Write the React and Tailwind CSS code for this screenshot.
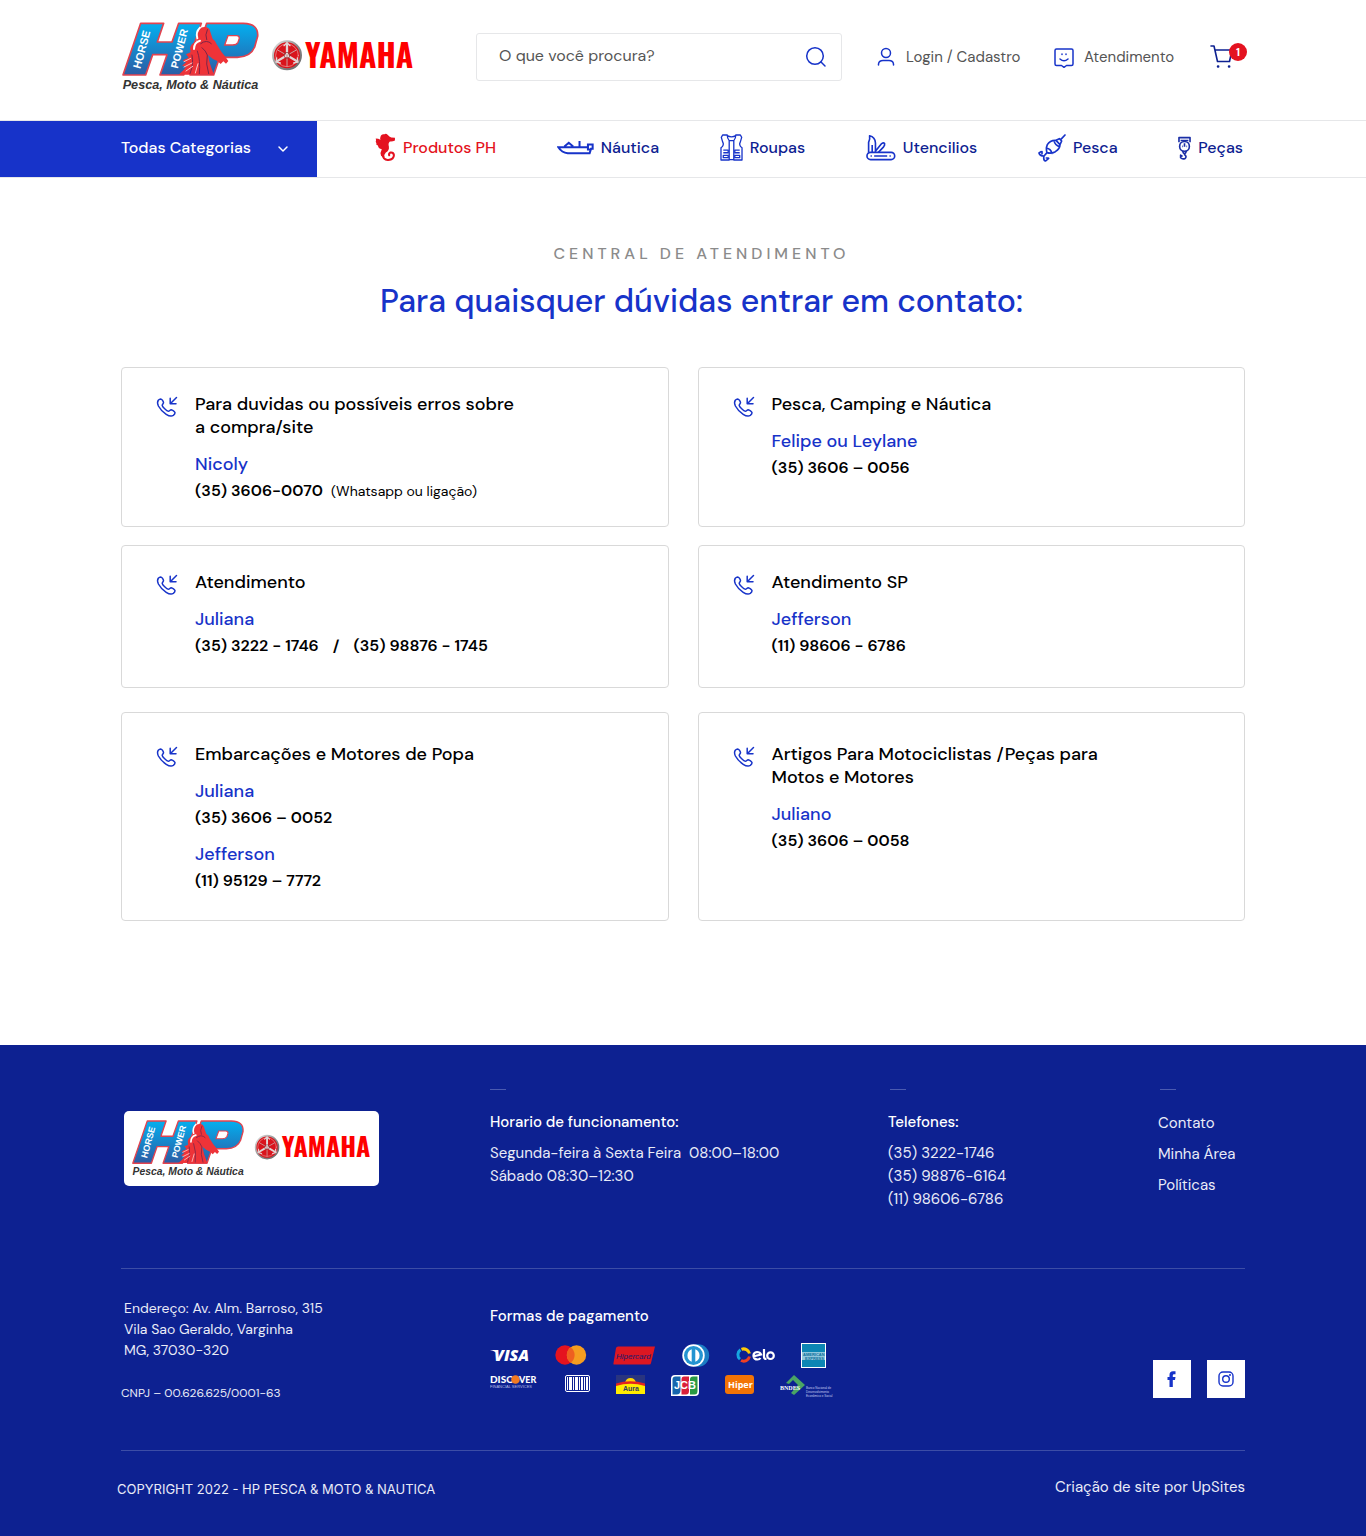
import React from "react";

const contacts = [
  [
    {
      title: ["Para duvidas ou possíveis erros sobre", "a compra/site"],
      people: [{ name: "Nicoly", phones: ["(35) 3606-0070"], note: "(Whatsapp ou ligação)" }],
    },
    { title: ["Pesca, Camping e Náutica"], people: [{ name: "Felipe ou Leylane", phones: ["(35) 3606 – 0056"] }] },
  ],
  [
    { title: ["Atendimento"], people: [{ name: "Juliana", phones: ["(35) 3222 - 1746", "(35) 98876 - 1745"] }] },
    { title: ["Atendimento SP"], people: [{ name: "Jefferson", phones: ["(11) 98606 - 6786"] }] },
  ],
  [
    {
      title: ["Embarcações e Motores de Popa"],
      people: [
        { name: "Juliana", phones: ["(35) 3606 – 0052"] },
        { name: "Jefferson", phones: ["(11) 95129 – 7772"] },
      ],
    },
    {
      title: ["Artigos Para Motociclistas /Peças para", "Motos e Motores"],
      people: [{ name: "Juliano", phones: ["(35) 3606 – 0058"] }],
    },
  ],
];
const rowMargins = ["", "mt-[18px]", "mt-6"];
const rowPads = ["pt-[25px] pb-[23px]", "pt-[25px] pb-[30px]", "pt-[30px] pb-7"];

function Logo({ id, className }) {
  const grad = `url(#${id})`;
  return (
    <svg viewBox="36 32 876 216" className={className} role="img" aria-label="HP Horse Power e Yamaha">
      <defs>
        <linearGradient id={id} x1="0" y1="38" x2="0" y2="193" gradientUnits="userSpaceOnUse">
          <stop offset="0" stopColor="#03b0f0" />
          <stop offset="1" stopColor="#2c5ca4" />
        </linearGradient>
        <linearGradient id={`${id}-m`} x1="0" y1="0" x2="1" y2="1">
          <stop offset="0" stopColor="#e9e9e9" />
          <stop offset="0.5" stopColor="#8d8d8d" />
          <stop offset="1" stopColor="#666" />
        </linearGradient>
      </defs>
      <g fill={grad} stroke="#e2434f" strokeWidth="5" strokeLinejoin="round">
        <path d="M92 39H161L142 95H186L206 39H274L221 194H150L171 133H128L107 194H39Z" />
        <path d="M290 39H400Q446 40 443 78L434 110Q422 140 382 141H329L311 194H240L262 120Z" />
      </g>
      <path d="M354 76L344 104H368Q380 104 384 96L388 84Q388 76 380 76Z" fill="#fff" stroke="#e2434f" strokeWidth="4" />
      <path
        d="M262 62Q272 48 288 50Q296 52 299 58Q304 74 308 86Q318 92 320 102L334 124Q346 138 355 152L348 160L340 153L332 161L322 152Q306 146 294 134Q298 160 312 193H206Q222 180 230 168L216 166L228 156L218 150L236 142L228 132L242 126Q236 108 250 98L260 90Q256 74 262 62Z"
        fill="#ee3338"
      />
      <g fill="none" strokeLinecap="round">
        <path d="M262 84Q256 66 270 52M252 116Q252 96 270 91" stroke="#fff" strokeWidth="6" />
        <path d="M272 100Q290 86 304 100M276 112Q288 122 292 134Q286 160 296 190M262 122Q272 150 268 190M246 134Q252 160 240 190M292 58Q284 74 290 88" stroke="#7d2547" strokeWidth="3" />
        <path d="M222 154L242 144M222 170L246 158M228 182L248 168M256 188L264 160" stroke="#fbc9c9" strokeWidth="3" />
      </g>
      <g fill="#fff" fontFamily='"Liberation Sans", Arial, sans-serif' fontWeight="700">
        <text transform="translate(91 177) rotate(-75)" fontSize="33">HORSE</text>
        <text transform="translate(203 176) rotate(-75)" fontSize="32">POWER</text>
      </g>
      <text x="38" y="236" fill="#333" fontFamily='"Liberation Sans", Arial, sans-serif' fontWeight="700" fontStyle="italic" fontSize="38">
        Pesca, Moto &amp; Náutica
      </text>
      <circle cx="531" cy="135" r="42" fill="#d9141c" stroke={`url(#${id}-m)`} strokeWidth="6" />
      <g fill="none" stroke="#e2d6d6" strokeLinecap="round">
        <circle cx="531" cy="135" r="34" strokeWidth="2" stroke="#f0a5a5" />
        <path d="M531 100V135M501 153L531 135L561 153" strokeWidth="7" />
        <path d="M531 135V168M503 119L531 135L559 119" strokeWidth="3" stroke="#c9a1a3" />
        <path d="M522 106L531 97L540 106M500 143L498 155L511 158M562 143L564 155L551 158" strokeWidth="4" />
        <circle cx="531" cy="135" r="9" strokeWidth="2" stroke="#7c3034" />
      </g>
      <text x="585" y="173" fill="#fe0000" fontFamily='Oswald, "Roboto Condensed", Roboto, sans-serif' fontWeight="700" fontSize="95">
        YAMAHA
      </text>
    </svg>
  );
}

function SeahorseIcon() {
  return (
    <svg viewBox="46 40 62 86" className="h-[29px] w-[21px] shrink-0" aria-hidden="true">
      <path d="M62 52Q64 42 74 44Q78 40 84 46Q88 51 94 53L105 54V62Q98 66 90 65Q84 70 87 80Q89 92 78 98Q72 104 74 112L64 108Q60 98 66 88Q58 86 56 82Q56 76 50 75Q51 70 48 66Q50 62 48 56Q56 56 62 60Q60 56 62 52Z" fill="#e41220" />
      <path d="M68 102Q70 121 85 120Q102 118 102 105Q100 96 91 98Q86 101 88 106" fill="none" stroke="#e41220" strokeWidth="6" strokeLinecap="round" />
    </svg>
  );
}
function BoatIcon() {
  return (
    <svg viewBox="590 60 110 44" className="h-[15px] w-[37px] shrink-0" fill="none" stroke="#1733c9" strokeWidth="6" aria-hidden="true">
      <path d="M594 81H682V73H696V86H691L687 99H622Q604 97 594 81ZM612 79L625 68L638 79M657 63V80M682 81V88H692" />
    </svg>
  );
}
function VestIcon() {
  return (
    <svg viewBox="1078 42 70 82" className="h-[27px] w-[23px] shrink-0" fill="none" stroke="#1733c9" strokeWidth="4" strokeLinejoin="round" aria-hidden="true">
      <path d="M1086 45H1100Q1100 56 1106 62V121H1081V84Q1092 76 1086 66L1082 52ZM1140 45H1126Q1126 56 1120 62V121H1145V84Q1134 76 1140 66L1144 52ZM1100 47Q1113 54 1126 47M1106 62H1120M1106 120H1120" />
      <path d="M1088 91H1103V99H1088M1088 107H1103V114H1088ZM1138 91H1123V99H1138M1138 107H1123V114H1138Z" />
    </svg>
  );
}
function KnifeIcon() {
  return (
    <svg viewBox="136 42 92 80" className="h-[27px] w-[30px] shrink-0" fill="none" stroke="#1733c9" strokeWidth="5" strokeLinejoin="round" aria-hidden="true">
      <rect x="139" y="97" width="85" height="22" rx="11" />
      <path d="M144 97V66Q149 56 147 46Q164 50 165 68V97M155 97V74M166 92L184 70Q190 66 193 70Q194 75 190 80L174 97M161 108H201" />
      <path d="M150 108H154M208 108H212" />
    </svg>
  );
}
function LureIcon() {
  return (
    <svg viewBox="652 40 84 84" className="h-7 w-7 shrink-0" fill="none" stroke="#1733c9" strokeWidth="5" strokeLinecap="round" strokeLinejoin="round" aria-hidden="true">
      <path d="M733 43L720 57M706 59L716 54L723 61L718 72M706 59Q688 58 680 72Q675 84 679 96Q692 100 704 93Q718 84 718 72ZM700 60Q703 74 717 78M677 82Q690 84 694 98M679 96L670 106Q657 106 655 97L661 93M670 106Q667 119 675 121L684 113M664 93V99M683 112H677" />
    </svg>
  );
}
function HookIcon() {
  return (
    <svg viewBox="1072 46 40 72" className="h-6 w-[13px] shrink-0" fill="none" stroke="#1a2ea6" strokeWidth="5" strokeLinejoin="round" aria-hidden="true">
      <path d="M1075 64V50H1109V64M1080 59H1104" />
      <circle cx="1092" cy="77" r="15" />
      <path d="M1092 67V78M1085 77H1087M1098 77H1100M1086 91L1089 98H1095L1098 91M1092 98V102Q1100 108 1094 114Q1086 118 1080 112V104L1086 108" />
    </svg>
  );
}

const nav = [
  { label: "Produtos PH", icon: <SeahorseIcon />, cls: "text-[#e41220]" },
  { label: "Náutica", icon: <BoatIcon />, cls: "text-[#0d2191]" },
  { label: "Roupas", icon: <VestIcon />, cls: "text-[#0d2191]" },
  { label: "Utencilios", icon: <KnifeIcon />, cls: "text-[#0d2191]" },
  { label: "Pesca", icon: <LureIcon />, cls: "text-[#0d2191]" },
  { label: "Peças", icon: <HookIcon />, cls: "text-[#0d2191]" },
];

function PhoneIcon() {
  return (
    <svg viewBox="0 0 24 24" className="mt-[2px] h-6 w-6 shrink-0" fill="none" stroke="#1733c9" strokeWidth="1.500" strokeLinecap="round" strokeLinejoin="round" aria-hidden="true">
      <path d="M21.500 2.500L15.500 8.500M15.200 3.200V8.800H21" />
      <path d="M3.300 5.200C4 4.400 4.800 3.900 5.600 3.900C6.800 4 8.200 6.200 8.500 7.400C8.700 8.600 7.200 9.100 7.200 10.300C7.400 11.800 11.600 16 13.400 16.200C14.600 16.200 15 14.800 16.200 14.800C17.400 15 19.800 16.400 20 17.700C20 18.600 19.400 19.600 18.300 20.400C16.400 21.700 13.800 21 11.200 19.300C8.200 17.300 5 14 3.400 11C2.400 8.800 2.200 6.700 3.300 5.200Z" />
    </svg>
  );
}

function Card({ card, pad }) {
  return (
    <article className={`flex gap-4 rounded border border-[#d9d9d9] bg-white pl-[33px] pr-4 ${pad}`}>
      <PhoneIcon />
      <div>
        <h2 className="text-lg leading-[23px] font-medium text-black">
          {card.title.map((t) => (
            <span key={t} className="block">{t}</span>
          ))}
        </h2>
        {card.people.map((p) => (
          <div key={p.name} className="mt-[14px]">
            <p className="text-lg leading-[23px] font-medium text-[#1733c9]">{p.name}</p>
            <p className="mt-[3px] flex items-baseline text-base leading-[23px] font-semibold text-black">
              {p.phones.map((n, i) => (
                <React.Fragment key={n}>
                  {i > 0 && <span className="mx-[14px]">/</span>}
                  <a href={`tel:${n.replace(/\D/g, "")}`}>{n}</a>
                </React.Fragment>
              ))}
              {p.note && <span className="ml-2 text-sm leading-[23px] font-normal">{p.note}</span>}
            </p>
          </div>
        ))}
      </div>
    </article>
  );
}

const brandFont = '"Liberation Sans", Arial, sans-serif';

function Payments() {
  return (
    <div className="mt-[14px]">
      <div className="flex h-[26px] items-center gap-[26px]">
        <svg className="h-5 w-[39px]" viewBox="0 0 39 20" role="img" aria-label="Visa">
          <text x="4" y="16" fill="#fff" fontFamily='"Open Sans", sans-serif' fontStyle="italic" fontWeight="800" fontSize="16">VISA</text>
          <path d="M0 5H6L9 11Q6 6 0 5Z" fill="#fff" />
        </svg>
        <svg className="h-5 w-8" viewBox="0 0 32 20" role="img" aria-label="Mastercard">
          <circle cx="10" cy="10" r="9.700" fill="#e5131f" />
          <circle cx="21.500" cy="10" r="9.700" fill="#f59d20" />
          <path d="M15.700 2.200A9.700 9.700 0 0 1 15.700 17.800A9.700 9.700 0 0 1 15.700 2.200Z" fill="#ee6020" />
        </svg>
        <svg className="h-[19px] w-[43px]" viewBox="0 0 43 19" role="img" aria-label="Hipercard">
          <path d="M5 0.500H42L38 17Q38 18.500 36 18.500H1Q0 18.500 0.500 17L3 2Q3.500 0.500 5 0.500Z" fill="#dd1722" />
          <text x="3" y="12.500" fill="#171c6e" fontFamily={brandFont} fontStyle="italic" fontSize="8">Hipercard</text>
        </svg>
        <svg className="h-[23px] w-7" viewBox="0 0 28 23" role="img" aria-label="Diners Club">
          <circle cx="16" cy="11.500" r="11.200" fill="#1b7dc4" />
          <circle cx="11.500" cy="11.500" r="11.200" fill="#fff" />
          <circle cx="11.500" cy="11.500" r="9.500" fill="#2494d1" />
          <path d="M9.700 5.200A6.800 6.800 0 0 0 9.700 17.800ZM13.300 5.200A6.800 6.800 0 0 1 13.300 17.800Z" fill="#fff" />
        </svg>
        <svg className="h-4 w-[39px]" viewBox="0 0 39 16" fill="none" role="img" aria-label="Elo">
          <path d="M4.500 2.700A6 6 0 0 0 4 12.200" stroke="#16a6e0" strokeWidth="3" />
          <path d="M5.500 2.300A6 6 0 0 1 13.500 6.500" stroke="#ffcb05" strokeWidth="3" />
          <path d="M13.500 9.500A6 6 0 0 1 5 13.500" stroke="#ee4023" strokeWidth="3" />
          <path d="M17 9.500L25 7.500Q24 5 21 5Q17.200 5.500 17.500 9Q18 12.500 21.500 12.500Q23.500 12.500 24.500 11M28 2V10Q28 12 30.500 12" stroke="#fff" strokeWidth="2.200" />
          <circle cx="34.500" cy="8.700" r="3.300" stroke="#fff" strokeWidth="2.200" />
        </svg>
        <svg className="h-[25px] w-[25px]" viewBox="0 0 25 25" role="img" aria-label="American Express">
          <rect width="25" height="25" fill="#fff" />
          <rect x="1" y="1" width="23" height="23" fill="#0c86b4" />
          <path d="M1 9H24V17H1Z" fill="#8fc7dd" />
          <text x="2" y="12.800" fill="#0c6f9c" fontFamily={brandFont} fontWeight="700" fontSize="4">AMERICAN</text>
          <text x="4" y="16.600" fill="#0c6f9c" fontFamily={brandFont} fontWeight="700" fontSize="4">EXPRESS</text>
        </svg>
      </div>
      <div className="mt-[7px] flex h-6 items-start gap-[26px]">
        <svg className="-mt-1 h-5 w-[49px]" viewBox="0 -4 49 20" role="img" aria-label="Discover Financial Services">
          <text x="0" y="8" fill="#fff" fontFamily="Lato, sans-serif" fontWeight="900" fontSize="10">DISC</text>
          <circle cx="25.500" cy="4.500" r="4.300" fill="#f27a22" />
          <text x="29" y="8" fill="#fff" fontFamily="Lato, sans-serif" fontWeight="900" fontSize="9">VER</text>
          <text x="0" y="13" fill="#b6bde4" fontFamily={brandFont} fontSize="4">FINANCIAL SERVICES</text>
        </svg>
        <svg className="h-[17px] w-[25px]" viewBox="0 0 25 17" role="img" aria-label="Boleto">
          <rect x="0.500" y="0.500" width="24" height="16" rx="1.500" fill="#0d2191" stroke="#fff" />
          <path d="M2 2H3V15H2ZM4 2H7V15H4ZM8 2H9V15H8ZM10 2H13V15H10ZM14 2H15V15H14ZM16 2H18V15H16ZM19 2H20V15H19ZM21 2H23V15H21Z" fill="#fff" />
        </svg>
        <svg className="h-[19px] w-[29px]" viewBox="0 0 29 19" role="img" aria-label="Aura">
          <rect width="29" height="19" fill="#29347f" />
          <path d="M9 8Q10 3 14.500 3Q19 3 20 8Z" fill="#ffd400" />
          <path d="M0 8.500Q14.500 4 29 8.500V19H0Z" fill="#e4231f" />
          <path d="M0 11Q14.500 6.500 29 11V19H0Z" fill="#ffec00" />
          <text x="7" y="16" fill="#333b60" fontFamily={brandFont} fontWeight="700" fontSize="7">Aura</text>
        </svg>
        <svg className="h-[21px] w-7" viewBox="0 0 28 21" role="img" aria-label="JCB">
          <path d="M4 0H28V17Q28 21 24 21H0V4Q0 0 4 0Z" fill="#fff" />
          <path d="M4.500 1.500H9.500V15Q9.500 19.500 5.500 19.500H1.500V4.500Q1.500 1.500 4.500 1.500Z" fill="#1766ad" />
          <path d="M13 1.500H18V16Q18 19.500 15 19.500H10.500V4.500Q10.500 1.500 13 1.500Z" fill="#d9203a" />
          <path d="M22 1.500H26.500V16Q26.500 19.500 23.500 19.500H19V4.500Q19 1.500 22 1.500Z" fill="#299a43" />
          <text x="3" y="14" fill="#fff" fontFamily={brandFont} fontWeight="700" fontSize="11">JCB</text>
        </svg>
        <svg className="h-[19px] w-[29px]" viewBox="0 0 29 19" role="img" aria-label="Hiper">
          <rect width="29" height="19" rx="3" fill="#f27405" />
          <text x="3" y="13" fill="#fff" fontFamily='"Open Sans", sans-serif' fontWeight="700" fontSize="9">Hiper</text>
        </svg>
        <svg className="h-6 w-[54px]" viewBox="0 0 54 24" role="img" aria-label="BNDES">
          <path d="M6 8L14 0L25 10L14 20L11 18L18 10L13 5L9 9Z" fill="#4aa564" />
          <text x="0" y="15" fill="#fff" fontFamily='"Liberation Serif", serif' fontWeight="700" fontSize="6">BNDES</text>
          <g fill="#c6cdf0" fontFamily={brandFont} fontSize="3">
            <text x="26" y="14">Banco Nacional de</text>
            <text x="26" y="18">Desenvolvimento</text>
            <text x="26" y="22">Econômico e Social</text>
          </g>
        </svg>
      </div>
    </div>
  );
}

export default function App() {
  return (
    <div className="min-h-screen bg-white font-['DM_Sans','Inter',sans-serif] text-black">
      <header>
        <div className="mx-auto grid h-[120px] max-w-[1124px] grid-cols-[355fr_366fr_212fr_156fr_35fr] items-start">
          <a href="#" className="mt-[21px] ml-px block">
            <Logo id="hp-header" className="h-[72px] w-[292px]" />
          </a>
          <form className="mt-[33px] flex h-12 items-center rounded-[3px] border border-[#e6e7e9] pr-[14px]">
            <label htmlFor="search" className="sr-only">Buscar produtos</label>
            <input id="search" type="text" placeholder="O que você procura?" className="mb-[3px] h-10 min-w-0 flex-1 pl-[22px] text-base leading-6 text-[#555] outline-none placeholder:text-[#555]" />
            <button type="button" aria-label="Buscar">
              <svg viewBox="0 0 22 22" className="h-[22px] w-[22px]" fill="none" stroke="#1733c9" strokeWidth="1.500" strokeLinecap="round">
                <circle cx="10" cy="10" r="8.300" />
                <path d="M16 16L20 20" />
              </svg>
            </button>
          </form>
          <a href="#" className="mt-[46px] flex items-center gap-[11px] pl-[35px] text-[15px] leading-[22px] whitespace-nowrap text-[#555]">
            <svg viewBox="0 0 18 20" className="h-5 w-[18px]" fill="none" stroke="#1733c9" strokeWidth="1.500" strokeLinecap="round" aria-hidden="true">
              <circle cx="9" cy="6" r="4.500" />
              <path d="M1.500 18V17Q2 13.500 6 13.500H12Q16 13.500 16.500 17V18" />
            </svg>
            Login / Cadastro
          </a>
          <a href="#" className="mt-[46px] flex items-center gap-[10px] text-[15px] leading-[22px] whitespace-nowrap text-[#555]">
            <svg viewBox="0 0 20 20" className="mt-px h-5 w-5" fill="none" stroke="#1733c9" strokeWidth="1.500" strokeLinecap="round" strokeLinejoin="round" aria-hidden="true">
              <path d="M2.500 1H17.500Q19 1 19 2.500V16Q19 17.500 17.500 17.500H12.500L10 19.300L7.500 17.500H2.500Q1 17.500 1 16V2.500Q1 1 2.500 1ZM6 11Q10 14.500 14 11" />
              <path d="M8 6V6.500M12 6V6.500" />
            </svg>
            Atendimento
          </a>
          <a href="#" aria-label="Carrinho" className="relative mt-[45px] block">
            <svg viewBox="0 0 24 24" className="h-6 w-6" fill="none" stroke="#0d2191" strokeWidth="1.600" strokeLinecap="round" strokeLinejoin="round" aria-hidden="true">
              <path d="M1 1H4L7.500 16.500H19.500L22 5H5" />
              <path d="M8 21.500H8.200M19 21.500H19.200" strokeWidth="2.500" />
            </svg>
            <span className="absolute -top-0.5 -right-0.5 flex h-[18px] w-[18px] items-center justify-center rounded-full bg-[#e41220] text-[11px] leading-none font-bold text-white">1</span>
          </a>
        </div>
        <div className="grid h-[58px] grid-cols-[1fr_minmax(0,196px)_minmax(0,928px)_1fr] border-y border-[#e6e7e9]">
          <button type="button" className="col-span-2 flex justify-end bg-[#1733c9] text-white">
            <span className="flex h-full w-[196px] items-center justify-between pr-[27px] pb-[3px] text-base leading-6 font-medium">
              Todas Categorias
              <svg viewBox="0 0 14 14" className="mt-[3px] h-[14px] w-[14px]" fill="none" stroke="#fff" strokeWidth="1.500" strokeLinecap="round" strokeLinejoin="round" aria-hidden="true">
                <path d="M3 5L7 9L11 5" />
              </svg>
            </span>
          </button>
          <nav className="flex items-center justify-between pr-[2px] pb-[3px] pl-[58px]">
            {nav.map((n) => (
              <a key={n.label} href="#" className={`flex items-center gap-[7px] text-base leading-6 font-medium whitespace-nowrap ${n.cls}`}>
                {n.icon}
                {n.label}
              </a>
            ))}
          </nav>
        </div>
      </header>

      <main className="mx-auto max-w-[1124px] pt-16 pb-[124px]">
        <div className="pl-[37px] text-center">
          <p className="text-base leading-6 font-medium tracking-[4px] text-[#8b8b8b]">CENTRAL DE ATENDIMENTO</p>
          <h1 className="mt-[14px] text-[32px] leading-[42px] font-medium text-[#1733c9]">Para quaisquer dúvidas entrar em contato:</h1>
        </div>
        <div className="mt-[45px]">
          {contacts.map((row, i) => (
            <div key={i} className={`grid grid-cols-2 gap-x-[29px] ${rowMargins[i]}`}>
              {row.map((c) => (
                <Card key={c.title[0]} card={c} pad={rowPads[i]} />
              ))}
            </div>
          ))}
        </div>
      </main>

      <footer className="bg-[#0d2191] text-[#e9ebf7]">
        <div className="mx-auto max-w-[1124px] pt-11">
          <div className="grid min-h-[179px] grid-cols-[369fr_398fr_270fr_87fr] text-[15px] leading-[23px] whitespace-nowrap">
            <div className="pt-[22px] pl-[3px]">
              <div className="flex h-[75px] w-[255px] items-center justify-center rounded-[5px] bg-white">
                <Logo id="hp-footer" className="h-[59px] w-[239px]" />
              </div>
            </div>
            <div>
              <div className="h-px w-4 bg-[#4a5ab0]" />
              <h3 className="mt-[21px] font-medium text-white">Horario de funcionamento:</h3>
              <p className="mt-2">Segunda-feira à Sexta Feira&nbsp; 08:00–18:00</p>
              <p>Sábado 08:30–12:30</p>
            </div>
            <div>
              <div className="ml-0.5 h-px w-4 bg-[#4a5ab0]" />
              <h3 className="mt-[21px] font-medium text-white">Telefones:</h3>
              <p className="mt-2">(35) 3222-1746</p>
              <p>(35) 98876-6164</p>
              <p>(11) 98606-6786</p>
            </div>
            <div>
              <div className="ml-0.5 h-px w-4 bg-[#4a5ab0]" />
              <div className="mt-[22px] flex flex-col gap-2">
                <a href="#">Contato</a>
                <a href="#">Minha Área</a>
                <a href="#">Políticas</a>
              </div>
            </div>
          </div>
          <div className="grid min-h-[183px] grid-cols-[369fr_663fr_92fr] border-y border-[#3c4da6]">
            <div className="pt-[29px] pl-[3px]">
              <address className="text-sm leading-[21px] not-italic">
                Endereço: Av. Alm. Barroso, 315
                <br />
                Vila Sao Geraldo, Varginha
                <br />
                MG, 37030-320
              </address>
              <p className="mt-[23px] -ml-[3px] text-xs leading-[18px]">CNPJ – 00.626.625/0001-63</p>
            </div>
            <div className="pt-9">
              <h3 className="text-[15px] leading-[23px] font-medium text-white">Formas de pagamento</h3>
              <Payments />
            </div>
            <div className="flex gap-4 pt-[91px]">
              <a href="#" aria-label="Facebook" className="flex h-[38px] w-[38px] items-center justify-center bg-white">
                <svg viewBox="0 0 10 16" className="h-4 w-[10px]" fill="#1733c9" aria-hidden="true">
                  <path d="M2.500 16V9H0.500V6H2.500V4Q2.500 0.300 6 0.300H8.500V3.200H7Q5.800 3.200 5.800 4.300V6H8.500L8 9H5.800V16Z" />
                </svg>
              </a>
              <a href="#" aria-label="Instagram" className="flex h-[38px] w-[38px] items-center justify-center bg-white">
                <svg viewBox="0 0 16 16" className="h-4 w-4" fill="none" stroke="#1733c9" strokeWidth="1.400" aria-hidden="true">
                  <rect x="1" y="1" width="14" height="14" rx="4" />
                  <circle cx="8" cy="8" r="3.300" />
                  <circle cx="12" cy="4" r="0.400" />
                </svg>
              </a>
            </div>
          </div>
          <div className="flex min-h-[85px] items-start justify-between pt-[25px]">
            <p className="-ml-1 pt-1 font-['Inter',sans-serif] text-[13px] leading-[18px]">COPYRIGHT 2022 - HP PESCA &amp; MOTO &amp; NAUTICA</p>
            <a href="#" className="text-[15px] leading-[23px]">Criação de site por UpSites</a>
          </div>
        </div>
      </footer>
    </div>
  );
}
